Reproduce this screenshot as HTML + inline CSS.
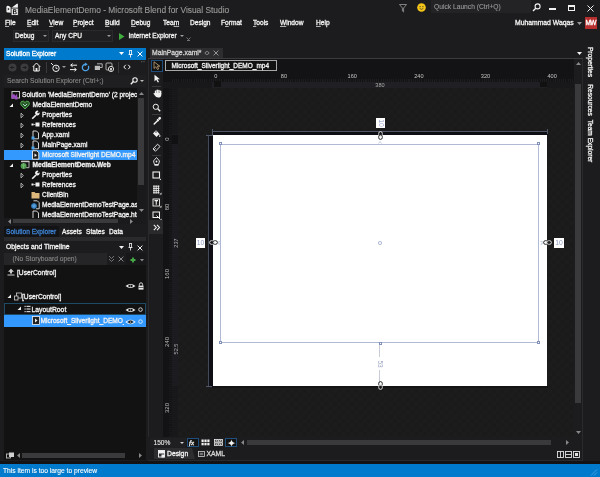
<!DOCTYPE html>
<html><head><meta charset="utf-8">
<style>
*{margin:0;padding:0;box-sizing:border-box}
html,body{width:600px;height:477px;overflow:hidden;background:#1c1c1e;font-family:"Liberation Sans",sans-serif;color:#f1f1f1;font-size:6.5px}
.a{position:absolute;white-space:nowrap;overflow:visible}
.t{position:absolute;white-space:nowrap;line-height:10px;-webkit-text-stroke-width:0.3px}
u{text-decoration:underline;text-decoration-thickness:0.6px;text-underline-offset:0.6px;text-decoration-color:#b0b0b0}
</style></head><body>
<div style="position:absolute;left:0;top:0;width:600px;height:477px;overflow:hidden;will-change:transform">

<svg class="a" style="left:6px;top:3px;" width="13" height="13" viewBox="0 0 13 13"><path d="M0.4 4 Q0.6 2.9 1.8 2.8 L3 3 L5.2 5 L11.2 0.6 L11.9 0.9 L11.9 11 L5 10 L3 9.4 L1.6 9.6 Q0.5 9.5 0.4 8.4 Z" fill="#f2f2f2"/><path d="M1.8 4.8 L3.6 6.1 L1.8 7.4 Z" fill="#1c1c1e"/><rect x="5.1" y="5.1" width="7.2" height="7.4" fill="#f2f2f2" stroke="#1c1c1e" stroke-width="0.9"/><path d="M6.9 6.3 H9.3 Q10.6 6.4 10.5 7.7 Q10.4 8.4 9.7 8.7 Q10.9 9 10.8 10.2 Q10.6 11.3 9.3 11.3 H6.9 Z M8 7.2 V8.3 H9 Q9.5 8.2 9.5 7.75 Q9.5 7.2 9 7.2 Z M8 9.1 V10.4 H9.2 Q9.8 10.4 9.8 9.75 Q9.8 9.1 9.2 9.1 Z" fill="#1c1c1e" fill-rule="evenodd"/></svg>
<div class="t" style="left:25px;top:5px;font-size:8.4px;color:#9c9c9c;-webkit-text-stroke-width:0.1px">MediaElementDemo - Microsoft Blend for Visual Studio</div>
<svg class="a" style="left:399px;top:4px;" width="8" height="9" viewBox="0 0 8 9"><path d="M0.5 0.5 H7.5 L4.6 4 V8 L3.4 7 V4 Z" fill="none" stroke="#9a9a9a" stroke-width="0.8"/></svg>
<svg class="a" style="left:417px;top:3px;" width="9" height="9" viewBox="0 0 9 9"><circle cx="4.5" cy="4.5" r="4.3" fill="#f5c518"/><circle cx="3.1" cy="3.6" r="0.6" fill="#333"/><circle cx="5.9" cy="3.6" r="0.6" fill="#333"/><path d="M2.6 5.4 Q4.5 7.3 6.4 5.4" stroke="#333" stroke-width="0.7" fill="none"/></svg>
<div class="a" style="left:430.5px;top:0px;width:100px;height:13px;background:#232326;"></div>
<div class="t" style="left:434px;top:2px;font-size:6.7px;color:#9a9a9a;-webkit-text-stroke-width:0.1px">Quick Launch (Ctrl+Q)</div>
<svg class="a" style="left:532px;top:2.5px;" width="9" height="9" viewBox="0 0 9 9"><circle cx="5.6" cy="3.4" r="2.5" fill="none" stroke="#f1f1f1" stroke-width="1.1"/><path d="M3.8 5.2 L1 8" stroke="#f1f1f1" stroke-width="1.4"/></svg>
<div class="a" style="left:549px;top:8px;width:7px;height:2px;background:#f1f1f1;"></div>
<div class="a" style="left:568px;top:4.5px;width:7px;height:6px;border:1px solid #f1f1f1;border-top-width:2px"></div>
<svg class="a" style="left:587px;top:4.5px;" width="7" height="7" viewBox="0 0 7 7"><path d="M0.5 0.5 L6.5 6.5 M6.5 0.5 L0.5 6.5" stroke="#f1f1f1" stroke-width="1"/></svg>
<div class="t" style="left:5px;top:18px;font-size:6.6px;color:#f1f1f1;"><u>F</u>ile</div>
<div class="t" style="left:27px;top:18px;font-size:6.6px;color:#f1f1f1;"><u>E</u>dit</div>
<div class="t" style="left:49px;top:18px;font-size:6.6px;color:#f1f1f1;"><u>V</u>iew</div>
<div class="t" style="left:73px;top:18px;font-size:6.6px;color:#f1f1f1;"><u>P</u>roject</div>
<div class="t" style="left:105px;top:18px;font-size:6.6px;color:#f1f1f1;"><u>B</u>uild</div>
<div class="t" style="left:131px;top:18px;font-size:6.6px;color:#f1f1f1;"><u>D</u>ebug</div>
<div class="t" style="left:163px;top:18px;font-size:6.6px;color:#f1f1f1;">Tea<u>m</u></div>
<div class="t" style="left:190px;top:18px;font-size:6.6px;color:#f1f1f1;">Design</div>
<div class="t" style="left:221px;top:18px;font-size:6.6px;color:#f1f1f1;">F<u>o</u>rmat</div>
<div class="t" style="left:253px;top:18px;font-size:6.6px;color:#f1f1f1;"><u>T</u>ools</div>
<div class="t" style="left:280px;top:18px;font-size:6.6px;color:#f1f1f1;"><u>W</u>indow</div>
<div class="t" style="left:316px;top:18px;font-size:6.6px;color:#f1f1f1;"><u>H</u>elp</div>
<div class="t" style="left:515px;top:18px;font-size:6.8px;color:#f1f1f1;">Muhammad Waqas</div>
<svg class="a" style="left:577px;top:22px;" width="5" height="3" viewBox="0 0 5 3"><path d="M0 0 H5 L2.5 3Z" fill="#9a9a9a"/></svg>
<div class="a" style="left:585px;top:17px;width:12px;height:12px;background:#b52f2f;"></div>
<div class="t" style="left:585.5px;top:18px;font-size:6.5px;color:#ffffff;letter-spacing:-0.6px">MW</div>
<div class="a" style="left:13px;top:30px;width:36px;height:12px;background:#1f1f21;border:1px solid #2a2a2d"></div>
<div class="t" style="left:15px;top:31px;font-size:6.6px;color:#f1f1f1;">Debug</div>
<svg class="a" style="left:43px;top:35px;" width="4" height="2" viewBox="0 0 4 2"><path d="M0 0 H4 L2 2Z" fill="#9a9a9a"/></svg>
<div class="a" style="left:52px;top:30px;width:61px;height:12px;background:#1f1f21;border:1px solid #2a2a2d"></div>
<div class="t" style="left:55px;top:31px;font-size:6.6px;color:#f1f1f1;">Any CPU</div>
<svg class="a" style="left:107px;top:35px;" width="4" height="2" viewBox="0 0 4 2"><path d="M0 0 H4 L2 2Z" fill="#9a9a9a"/></svg>
<svg class="a" style="left:118px;top:33px;" width="7" height="7" viewBox="0 0 7 7"><path d="M1 0 L6.5 3.5 L1 7Z" fill="#3fae3f"/></svg>
<div class="t" style="left:128.5px;top:31px;font-size:6.5px;color:#f1f1f1;">Internet Explorer</div>
<svg class="a" style="left:180px;top:35px;" width="4" height="2" viewBox="0 0 4 2"><path d="M0 0 H4 L2 2Z" fill="#9a9a9a"/></svg>
<svg class="a" style="left:186px;top:37px;" width="5" height="4" viewBox="0 0 5 4"><path d="M0.5 0.5 L2.5 2.5 L4.5 0.5 M1 3.5 H4" stroke="#9a9a9a" stroke-width="0.7" fill="none"/></svg>
<div class="a" style="left:4px;top:48px;width:142px;height:12px;background:#007acc;"></div>
<div class="t" style="left:6px;top:48.5px;font-size:6.6px;color:#ffffff;">Solution Explorer</div>
<svg class="a" style="left:119px;top:52px;" width="5" height="3" viewBox="0 0 5 3"><path d="M0 0 H5 L2.5 3Z" fill="#ffffff"/></svg>
<svg class="a" style="left:128px;top:50px;" width="5" height="8" viewBox="0 0 5 8"><path d="M1 0.5 H4 M1.5 0.5 V4.5 H3.5 V0.5 M0.5 4.5 H4.5 M2.5 4.5 V7.5" stroke="#ffffff" stroke-width="0.8" fill="none"/></svg>
<svg class="a" style="left:136.5px;top:50.5px;" width="6" height="6" viewBox="0 0 6 6"><path d="M0.6 0.6 L5.4 5.4 M5.4 0.6 L0.6 5.4" stroke="#ffffff" stroke-width="1"/></svg>
<div class="a" style="left:4px;top:60px;width:142px;height:160px;background:#1c1c1e;"></div>
<svg class="a" style="left:8px;top:63px;" width="9" height="9" viewBox="0 0 9 9"><circle cx="4.5" cy="4.5" r="4" fill="#3c3c3f"/><path d="M6.3 4.5 H2.8 M4.3 3 L2.8 4.5 L4.3 6" stroke="#1c1c1e" stroke-width="1" fill="none"/></svg>
<svg class="a" style="left:20px;top:63px;" width="9" height="9" viewBox="0 0 9 9"><circle cx="4.5" cy="4.5" r="4" fill="#3c3c3f"/><path d="M2.7 4.5 H6.2 M4.7 3 L6.2 4.5 L4.7 6" stroke="#1c1c1e" stroke-width="1" fill="none"/></svg>
<svg class="a" style="left:32px;top:62px;" width="9" height="10" viewBox="0 0 9 10"><path d="M0.8 4.8 L4.5 1 L8.2 4.8 M1.8 4 V9 H7.2 V4" stroke="#f1f1f1" stroke-width="1" fill="none"/><rect x="3.6" y="6" width="1.8" height="3" fill="#f1f1f1"/></svg>
<div class="a" style="left:46px;top:62px;width:1px;height:11px;background:#3a3a3d;"></div>
<svg class="a" style="left:50px;top:62px;" width="11" height="11" viewBox="0 0 11 11"><circle cx="6" cy="6.3" r="3.2" fill="none" stroke="#f1f1f1" stroke-width="1"/><path d="M6 4.5 V6.5 H7.5" stroke="#f1f1f1" stroke-width="0.8" fill="none"/><path d="M1 1 L3 3" stroke="#f1f1f1" stroke-width="1"/></svg>
<svg class="a" style="left:62px;top:66px;" width="4" height="2" viewBox="0 0 4 2"><path d="M0 0 H4 L2 2Z" fill="#9a9a9a"/></svg>
<svg class="a" style="left:69px;top:63px;" width="9" height="9" viewBox="0 0 9 9"><path d="M8 2.2 H2 M3.6 0.6 L1.6 2.2 L3.6 3.8 M1 6.6 H7 M5.4 5 L7.4 6.6 L5.4 8.2" stroke="#f1f1f1" stroke-width="1" fill="none"/></svg>
<svg class="a" style="left:81px;top:62px;" width="9" height="10" viewBox="0 0 9 10"><path d="M4.5 2.3 A3.2 3.2 0 1 0 7.3 3.9" stroke="#4ba3e8" stroke-width="1.3" fill="none"/><path d="M3.8 0.4 L6.8 2.3 L3.8 4.2 Z" fill="#4ba3e8"/></svg>
<svg class="a" style="left:94px;top:63px;" width="9" height="8" viewBox="0 0 9 8"><path d="M3 0.8 H8.2 V4.5 H6" stroke="#bdbdbd" stroke-width="0.9" fill="none"/><rect x="0.8" y="2.8" width="5.2" height="4.2" fill="#bdbdbd"/></svg>
<svg class="a" style="left:105px;top:62px;" width="10" height="11" viewBox="0 0 10 11"><rect x="1" y="1" width="6" height="7" rx="1" fill="none" stroke="#bdbdbd" stroke-width="0.9"/><circle cx="6" cy="7" r="2.6" fill="#1c1c1e" stroke="#f1f1f1" stroke-width="0.9"/><rect x="5.2" y="6" width="1.6" height="2.5" fill="#f1f1f1"/></svg>
<div class="a" style="left:118px;top:62px;width:1px;height:11px;background:#3a3a3d;"></div>
<svg class="a" style="left:123px;top:64px;" width="8" height="6" viewBox="0 0 8 6"><path d="M2.8 0.8 L0.8 3 L2.8 5.2 M5.2 0.8 L7.2 3 L5.2 5.2" stroke="#f1f1f1" stroke-width="1" fill="none"/></svg>
<svg class="a" style="left:141px;top:61px;" width="4" height="3" viewBox="0 0 4 3"><circle cx="0.7" cy="0.7" r="0.6" fill="#6a6a6a"/><circle cx="3" cy="0.7" r="0.6" fill="#6a6a6a"/></svg>
<div class="a" style="left:4px;top:75px;width:142px;height:12px;background:#1f1f21;"></div>
<div class="t" style="left:7px;top:76px;font-size:6.7px;color:#8a8a8a;-webkit-text-stroke-width:0.1px">Search Solution Explorer (Ctrl+;)</div>
<svg class="a" style="left:130px;top:77px;" width="8" height="8" viewBox="0 0 8 8"><circle cx="5" cy="3" r="2.2" fill="none" stroke="#f1f1f1" stroke-width="1.1"/><path d="M3.4 4.6 L0.8 7.2" stroke="#f1f1f1" stroke-width="1.4"/></svg>
<svg class="a" style="left:140px;top:80px;" width="4" height="2" viewBox="0 0 4 2"><path d="M0 0 H4 L2 2Z" fill="#bdbdbd"/></svg>
<div class="a" style="left:4px;top:88px;width:133px;height:130px;background:#121212;"></div>
<div class="a" style="left:137px;top:88px;width:9px;height:130px;background:#1a1a1c;"></div>
<svg class="a" style="left:139px;top:92px;" width="5" height="3" viewBox="0 0 5 3"><path d="M0 3 H5 L2.5 0Z" fill="#888"/></svg>
<div class="a" style="left:138px;top:98px;width:6px;height:87px;background:#3a3a3c;"></div>
<svg class="a" style="left:139px;top:209px;" width="5" height="3" viewBox="0 0 5 3"><path d="M0 0 H5 L2.5 3Z" fill="#888"/></svg>
<div class="a" style="left:4px;top:218px;width:133px;height:6px;background:#1a1a1c;"></div>
<svg class="a" style="left:8px;top:219px;" width="3" height="5" viewBox="0 0 3 5"><path d="M3 0 V5 L0 2.5Z" fill="#888"/></svg>
<div class="a" style="left:13px;top:219px;width:105px;height:4px;background:#3a3a3c;"></div>
<svg class="a" style="left:130px;top:219px;" width="3" height="5" viewBox="0 0 3 5"><path d="M0 0 V5 L3 2.5Z" fill="#888"/></svg>
<div class="a" style="left:137px;top:218px;width:9px;height:6px;background:#1a1a1c;"></div>
<div class="a" style="left:4px;top:88px;width:133px;height:130px;overflow:hidden">
<svg class="a" style="left:7px;top:2.8px" width="9" height="9"><rect x="1" y="0.5" width="7.5" height="6.5" fill="none" stroke="#d8d8d8" stroke-width="0.9"/><path d="M0.5 4 L3 3 L4.5 4.8 L6 2.8 L6.5 8.5 L4.5 8.5 L3 7 L0.5 8Z" fill="#9b4fbf"/></svg>
<div class="t" style="left:18px;top:1.8px;font-size:6.6px;color:#f1f1f1;">Solution 'MediaElementDemo' (2 projects)</div>
<svg class="a" style="left:5.199999999999999px;top:14.600000000000001px" width="5" height="5"><path d="M4 0.5 V4 H0.5Z" fill="#f1f1f1"/></svg>
<svg class="a" style="left:16px;top:11.8px" width="10" height="10"><path d="M5 9 L1 5 Q0 3 1.5 1.5 Q3.5 0.3 5 2.5 Q6.5 0.3 8.5 1.5 Q10 3 9 5Z" fill="#2a5a2a" stroke="#55b555" stroke-width="0.9"/><path d="M3 4 L5 6 L7 4" stroke="#cfe" stroke-width="0.8" fill="none"/></svg>
<div class="t" style="left:28.5px;top:11.8px;font-size:6.6px;color:#f1f1f1;">MediaElementDemo</div>
<svg class="a" style="left:16px;top:23.8px" width="5" height="7"><path d="M1 1.2 L3.4 3.5 L1 5.8Z" fill="none" stroke="#d0d0d0" stroke-width="0.8"/></svg>
<svg class="a" style="left:27px;top:21.8px" width="9" height="10"><path d="M1.2 8.8 L5 5" stroke="#f1f1f1" stroke-width="1.6"/><path d="M4.2 3.8 A2.3 2.3 0 0 1 7.6 1 L6.2 2.6 L7 3.5 L8.4 2.2 A2.3 2.3 0 0 1 5.6 5.4Z" fill="#f1f1f1"/></svg>
<div class="t" style="left:38px;top:21.8px;font-size:6.6px;color:#f1f1f1;">Properties</div>
<svg class="a" style="left:16px;top:33.8px" width="5" height="7"><path d="M1 1.2 L3.4 3.5 L1 5.8Z" fill="none" stroke="#d0d0d0" stroke-width="0.8"/></svg>
<svg class="a" style="left:27px;top:31.8px" width="9" height="10"><rect x="0.5" y="3.5" width="2" height="2" fill="#f1f1f1"/><rect x="2.5" y="4.2" width="2" height="0.7" fill="#f1f1f1"/><rect x="4.5" y="2.5" width="4" height="4" fill="#f1f1f1"/></svg>
<div class="t" style="left:38px;top:31.8px;font-size:6.6px;color:#f1f1f1;">References</div>
<svg class="a" style="left:16px;top:43.8px" width="5" height="7"><path d="M1 1.2 L3.4 3.5 L1 5.8Z" fill="none" stroke="#d0d0d0" stroke-width="0.8"/></svg>
<svg class="a" style="left:27px;top:41.8px" width="9" height="10"><path d="M2 1 H5.5 L7.5 3 V8.8 H2Z" fill="none" stroke="#e6e6e6" stroke-width="0.9"/><rect x="0.5" y="6.5" width="3" height="3" fill="#4ba3e8"/></svg>
<div class="t" style="left:38px;top:41.8px;font-size:6.6px;color:#f1f1f1;">App.xaml</div>
<svg class="a" style="left:16px;top:53.8px" width="5" height="7"><path d="M1 1.2 L3.4 3.5 L1 5.8Z" fill="none" stroke="#d0d0d0" stroke-width="0.8"/></svg>
<svg class="a" style="left:27px;top:51.8px" width="9" height="10"><path d="M2 1 H5.5 L7.5 3 V8.8 H2Z" fill="none" stroke="#e6e6e6" stroke-width="0.9"/><rect x="0.5" y="6.5" width="3" height="3" fill="#4ba3e8"/></svg>
<div class="t" style="left:38px;top:51.8px;font-size:6.6px;color:#f1f1f1;">MainPage.xaml</div>
<div class="a" style="left:0;top:61.8px;width:133px;height:10px;background:#3399ff"></div>
<svg class="a" style="left:27px;top:61.8px" width="9" height="10"><path d="M1.5 0.8 H5.8 L7.8 2.8 V9.2 H1.5Z" fill="#222" stroke="#f1f1f1" stroke-width="0.9"/><path d="M3.5 3.5 L6 5.2 L3.5 6.9Z" fill="#f1f1f1"/></svg>
<div class="t" style="left:38px;top:61.8px;font-size:6.6px;color:#f1f1f1;">Microsoft Silverlight DEMO.mp4</div>
<svg class="a" style="left:5.199999999999999px;top:74.6px" width="5" height="5"><path d="M4 0.5 V4 H0.5Z" fill="#f1f1f1"/></svg>
<svg class="a" style="left:16px;top:71.8px" width="10" height="10"><path d="M1.5 1.3 H9 V7.7 H6" fill="none" stroke="#c8c8c8" stroke-width="0.9"/><rect x="1" y="0.8" width="8.4" height="1.4" fill="#c8c8c8"/><circle cx="3.6" cy="6" r="3" fill="#4f9a4f"/><path d="M1.4 4.8 Q3.6 6.6 5.8 4.8 M3.6 3 V9" stroke="#8fd08f" stroke-width="0.5" fill="none"/></svg>
<div class="t" style="left:28.5px;top:71.8px;font-size:6.6px;color:#f1f1f1;font-weight:bold;">MediaElementDemo.Web</div>
<svg class="a" style="left:16px;top:83.8px" width="5" height="7"><path d="M1 1.2 L3.4 3.5 L1 5.8Z" fill="none" stroke="#d0d0d0" stroke-width="0.8"/></svg>
<svg class="a" style="left:27px;top:81.8px" width="9" height="10"><path d="M1.2 8.8 L5 5" stroke="#f1f1f1" stroke-width="1.6"/><path d="M4.2 3.8 A2.3 2.3 0 0 1 7.6 1 L6.2 2.6 L7 3.5 L8.4 2.2 A2.3 2.3 0 0 1 5.6 5.4Z" fill="#f1f1f1"/></svg>
<div class="t" style="left:38px;top:81.8px;font-size:6.6px;color:#f1f1f1;">Properties</div>
<svg class="a" style="left:16px;top:93.8px" width="5" height="7"><path d="M1 1.2 L3.4 3.5 L1 5.8Z" fill="none" stroke="#d0d0d0" stroke-width="0.8"/></svg>
<svg class="a" style="left:27px;top:91.8px" width="9" height="10"><rect x="0.5" y="3.5" width="2" height="2" fill="#f1f1f1"/><rect x="2.5" y="4.2" width="2" height="0.7" fill="#f1f1f1"/><rect x="4.5" y="2.5" width="4" height="4" fill="#f1f1f1"/></svg>
<div class="t" style="left:38px;top:91.8px;font-size:6.6px;color:#f1f1f1;">References</div>
<svg class="a" style="left:27px;top:101.8px" width="9" height="10"><path d="M0.5 2 H3.5 L4.5 3 H8.5 V8.5 H0.5Z" fill="#dcb67a"/></svg>
<div class="t" style="left:38px;top:101.8px;font-size:6.6px;color:#f1f1f1;">ClientBin</div>
<svg class="a" style="left:27px;top:111.8px" width="10" height="10"><path d="M2.5 0.8 H6.3 L8.2 2.7 V8.8 H5" fill="none" stroke="#e6e6e6" stroke-width="0.9"/><circle cx="3" cy="6" r="2.8" fill="#2f7fc0"/><path d="M0.6 6 H5.4 M3 3.3 V8.7" stroke="#9fd0ff" stroke-width="0.45"/></svg>
<div class="t" style="left:38px;top:111.8px;font-size:6.6px;color:#f1f1f1;">MediaElementDemoTestPage.aspx</div>
<svg class="a" style="left:27px;top:121.8px" width="9" height="10"><path d="M2 1 H5.5 L7.5 3 V9.5 H2Z" fill="none" stroke="#e6e6e6" stroke-width="0.9"/></svg>
<div class="t" style="left:38px;top:121.8px;font-size:6.6px;color:#f1f1f1;">MediaElementDemoTestPage.html</div>
</div>
<div class="a" style="left:4px;top:225px;width:142px;height:12px;background:#1c1c1e;"></div>
<div class="a" style="left:4px;top:226px;width:55px;height:11px;background:#131315;"></div>
<div class="t" style="left:6px;top:226.7px;font-size:6.6px;color:#3d80d0;">Solution Explorer</div>
<div class="t" style="left:62px;top:226.7px;font-size:6.6px;color:#f1f1f1;">Assets</div>
<div class="t" style="left:86px;top:226.7px;font-size:6.6px;color:#f1f1f1;">States</div>
<div class="t" style="left:109px;top:226.7px;font-size:6.6px;color:#f1f1f1;">Data</div>
<div class="a" style="left:4px;top:237px;width:142px;height:4px;background:#2a2a2d;"></div>
<div class="t" style="left:6px;top:242px;font-size:6.8px;color:#f1f1f1;">Objects and Timeline</div>
<svg class="a" style="left:119px;top:246px;" width="5" height="3" viewBox="0 0 5 3"><path d="M0 0 H5 L2.5 3Z" fill="#f1f1f1"/></svg>
<svg class="a" style="left:128px;top:243px;" width="5" height="8" viewBox="0 0 5 8"><path d="M1 0.5 H4 M1.5 0.5 V4.5 H3.5 V0.5 M0.5 4.5 H4.5 M2.5 4.5 V7.5" stroke="#f1f1f1" stroke-width="0.8" fill="none"/></svg>
<svg class="a" style="left:136.5px;top:244.5px;" width="6" height="6" viewBox="0 0 6 6"><path d="M0.6 0.6 L5.4 5.4 M5.4 0.6 L0.6 5.4" stroke="#f1f1f1" stroke-width="1"/></svg>
<div class="a" style="left:4px;top:253px;width:142px;height:12px;background:#1c1c1e;"></div>
<div class="a" style="left:4px;top:253px;width:103px;height:12px;background:#252527;"></div>
<div class="a" style="left:126px;top:253px;width:20px;height:12px;background:#18181a;"></div>
<div class="t" style="left:12.5px;top:254px;font-size:6.7px;color:#8a8a8a;-webkit-text-stroke-width:0.1px">(No Storyboard open)</div>
<svg class="a" style="left:108px;top:255px;" width="7" height="8" viewBox="0 0 7 8"><path d="M1 1 L3.5 3.5 L6 1 M1 4 L3.5 6.5 L6 4" stroke="#8a8a8a" stroke-width="0.8" fill="none"/></svg>
<svg class="a" style="left:118px;top:256px;" width="6" height="6" viewBox="0 0 6 6"><path d="M0.6 0.6 L5.4 5.4 M5.4 0.6 L0.6 5.4" stroke="#8a8a8a" stroke-width="1"/></svg>
<svg class="a" style="left:129.5px;top:256.5px;" width="6" height="6" viewBox="0 0 6 6"><path d="M3 0.5 V5.5 M0.5 3 H5.5" stroke="#45a845" stroke-width="1.8"/></svg>
<svg class="a" style="left:139.5px;top:258.5px;" width="4" height="2.5" viewBox="0 0 4 2.5"><path d="M0 0 H4 L2 2.5Z" fill="#8a8a8a"/></svg>
<div class="a" style="left:4px;top:265px;width:142px;height:195px;background:#121212;"></div>
<svg class="a" style="left:7px;top:268px;" width="8" height="8" viewBox="0 0 8 8"><path d="M4 0.8 L7 3.8 H5 V5.5 H3 V3.8 H1Z" fill="#d0d0d0"/><rect x="0.5" y="6.5" width="7" height="1" fill="#d0d0d0"/></svg>
<div class="t" style="left:17px;top:268px;font-size:6.7px;color:#f1f1f1;">[UserControl]</div>
<svg class="a" style="left:125px;top:283px" width="11" height="6"><path d="M0.5 3 Q5.5 -1.2 10.5 3 Q5.5 7.2 0.5 3Z" fill="#f1f1f1"/><ellipse cx="5.5" cy="3" rx="2.3" ry="1.3" fill="#121212"/><circle cx="5.5" cy="3" r="0.6" fill="#f1f1f1"/></svg>
<svg class="a" style="left:137.5px;top:281.5px;" width="6" height="8" viewBox="0 0 6 8"><path d="M1.4 3.6 V2.4 A1.6 1.6 0 0 1 4.6 2.4 V3.6" stroke="#e8e8e8" stroke-width="0.9" fill="none"/><rect x="0.5" y="3.6" width="5" height="4" fill="#e8e8e8"/><rect x="0.5" y="5.4" width="5" height="0.6" fill="#121212"/></svg>
<svg class="a" style="left:7px;top:294px;" width="5" height="5" viewBox="0 0 5 5"><path d="M4 0.5 V4 H0.5Z" fill="#f1f1f1"/></svg>
<svg class="a" style="left:14px;top:292px;" width="8" height="9" viewBox="0 0 8 9"><rect x="2.5" y="1" width="5" height="5" fill="none" stroke="#d0d0d0" stroke-width="0.8"/><rect x="0.5" y="4" width="3.5" height="4" fill="#111" stroke="#d0d0d0" stroke-width="0.8"/></svg>
<div class="t" style="left:22px;top:292px;font-size:6.7px;color:#f1f1f1;">[UserControl]</div>
<div class="a" style="left:4px;top:303px;width:141.5px;height:12px;border:1px solid #1f4a66;background:#121212"></div>
<svg class="a" style="left:17px;top:306px;" width="5" height="5" viewBox="0 0 5 5"><path d="M4 0.5 V4 H0.5Z" fill="#f1f1f1"/></svg>
<svg class="a" style="left:24px;top:305px;" width="7" height="8" viewBox="0 0 7 8"><rect x="0.5" y="0.8" width="1.2" height="1.2" fill="#d0d0d0"/><rect x="0.5" y="3.4" width="1.2" height="1.2" fill="#d0d0d0"/><rect x="0.5" y="6" width="1.2" height="1.2" fill="#d0d0d0"/><rect x="2.5" y="0.8" width="4" height="1.2" fill="#d0d0d0"/><rect x="2.5" y="3.4" width="4" height="1.2" fill="#d0d0d0"/><rect x="2.5" y="6" width="4" height="1.2" fill="#d0d0d0"/></svg>
<div class="t" style="left:31.5px;top:305px;font-size:6.8px;color:#f1f1f1;">LayoutRoot</div>
<svg class="a" style="left:125px;top:306.5px" width="11" height="6"><path d="M0.5 3 Q5.5 -1.2 10.5 3 Q5.5 7.2 0.5 3Z" fill="#f1f1f1"/><ellipse cx="5.5" cy="3" rx="2.3" ry="1.3" fill="#121212"/><circle cx="5.5" cy="3" r="0.6" fill="#f1f1f1"/></svg>
<svg class="a" style="left:137.5px;top:306.5px;" width="5" height="5" viewBox="0 0 5 5"><circle cx="2.5" cy="2.6" r="1.8" fill="none" stroke="#e0e0e0" stroke-width="0.9"/></svg>
<div class="a" style="left:4px;top:315px;width:142px;height:12px;background:#3399ff;"></div>
<svg class="a" style="left:32px;top:316px;" width="8" height="9" viewBox="0 0 8 9"><rect x="0.5" y="0.5" width="7" height="8" fill="#222" stroke="#f1f1f1" stroke-width="0.8"/><path d="M3 2.5 L5.5 4.5 L3 6.5Z" fill="#f1f1f1"/></svg>
<div class="a" style="left:40.5px;top:315px;width:83px;height:12px;overflow:hidden">
<div class="t" style="left:0;top:1.3px;font-size:6.6px;color:#f1f1f1">Microsoft_Silverlight_DEMO_mp4</div></div>
<svg class="a" style="left:125px;top:318.5px" width="11" height="6"><path d="M0.8 3 Q5.5 -0.6 10.2 3 Q5.5 6.6 0.8 3Z" fill="#3399ff" stroke="#f1f1f1" stroke-width="0.9"/><ellipse cx="5.5" cy="3" rx="2.3" ry="1.4" fill="#222"/><circle cx="5.5" cy="3" r="0.6" fill="#f1f1f1"/></svg>
<svg class="a" style="left:137.5px;top:318.5px;" width="5" height="5" viewBox="0 0 5 5"><circle cx="2.5" cy="2.6" r="1.8" fill="none" stroke="#d8ecff" stroke-width="0.9"/></svg>
<svg class="a" style="left:6px;top:452px;" width="9" height="7" viewBox="0 0 9 7"><rect x="0.5" y="2" width="4" height="4" fill="none" stroke="#d0d0d0" stroke-width="0.8"/><rect x="3" y="0.5" width="5" height="4.5" fill="#d0d0d0"/></svg>
<svg class="a" style="left:17px;top:453px;" width="3" height="5" viewBox="0 0 3 5"><path d="M3 0 V5 L0 2.5Z" fill="#888"/></svg>
<div class="a" style="left:22px;top:453px;width:103px;height:5px;background:#3a3a3c;"></div>
<svg class="a" style="left:139px;top:453px;" width="3" height="5" viewBox="0 0 3 5"><path d="M0 0 V5 L3 2.5Z" fill="#888"/></svg>
<div class="a" style="left:150px;top:48px;width:73px;height:10px;background:#2d2d30;"></div>
<div class="t" style="left:152px;top:48px;font-size:6.8px;color:#d0d0d0;">MainPage.xaml*</div>
<svg class="a" style="left:204px;top:50px;" width="6" height="6" viewBox="0 0 6 6"><circle cx="3" cy="3" r="1.6" fill="none" stroke="#8a8a8a" stroke-width="0.8"/><path d="M0.5 3 H1.4 M4.6 3 H5.5" stroke="#8a8a8a" stroke-width="0.8"/></svg>
<svg class="a" style="left:213px;top:50px;" width="6" height="6" viewBox="0 0 6 6"><path d="M0.6 0.6 L5.4 5.4 M5.4 0.6 L0.6 5.4" stroke="#a0a0a0" stroke-width="0.9"/></svg>
<svg class="a" style="left:577px;top:52px;" width="5" height="3" viewBox="0 0 5 3"><path d="M0 0 H5 L2.5 3Z" fill="#f1f1f1"/></svg>
<div class="a" style="left:148px;top:58px;width:435px;height:1px;background:#3c3c40;"></div>
<div class="a" style="left:148px;top:59px;width:435px;height:401px;background:#1c1c1e;"></div>
<div class="a" style="left:148px;top:59px;width:15px;height:378px;background:#1c1c1e;"></div>
<div class="a" style="left:148px;top:59px;width:1px;height:401px;background:#2a2a2d;"></div>
<div class="a" style="left:150.5px;top:59.5px;width:12.5px;height:12px;border:1px solid #1f4e7c;background:#121212"></div>
<svg class="a" style="left:153px;top:61px;" width="8" height="9" viewBox="0 0 8 9"><path d="M1 0.8 L1 7.5 L2.8 5.8 L4.5 8.5 L5.7 7.9 L4.2 5.2 L6.8 5.2 Z" fill="none" stroke="#c8a878" stroke-width="0.8"/></svg>
<svg class="a" style="left:153px;top:74px;" width="8" height="9" viewBox="0 0 8 9"><path d="M1.5 0.8 L1.5 7.5 L3.2 5.8 L4.8 8.5 L6 7.9 L4.5 5.2 L7 5.2 Z" fill="#f1f1f1"/></svg>
<div class="a" style="left:152px;top:86px;width:9px;height:1px;background:#3a3a3d;"></div>
<svg class="a" style="left:152.5px;top:89px;" width="9" height="9" viewBox="0 0 9 9"><rect x="1.8" y="1.4" width="1.5" height="4" rx="0.7" fill="#f1f1f1"/><rect x="3.5" y="0.5" width="1.5" height="4.5" rx="0.7" fill="#f1f1f1"/><rect x="5.2" y="0.7" width="1.5" height="4.3" rx="0.7" fill="#f1f1f1"/><rect x="6.9" y="1.6" width="1.4" height="3.8" rx="0.7" fill="#f1f1f1"/><path d="M1.8 4 H8.3 V6 Q8 8.6 5.2 8.6 Q2.8 8.6 1.8 6.6 L0.4 4.6 Q0.6 3.8 1.4 4.2 Z" fill="#f1f1f1"/></svg>
<svg class="a" style="left:152px;top:103px;" width="9" height="9" viewBox="0 0 9 9"><circle cx="3.8" cy="3.8" r="2.6" fill="none" stroke="#f1f1f1" stroke-width="1"/><path d="M5.8 5.8 L8.2 8.2" stroke="#f1f1f1" stroke-width="1.4"/></svg>
<div class="a" style="left:152px;top:114px;width:9px;height:1px;background:#3a3a3d;"></div>
<svg class="a" style="left:152.5px;top:116px;" width="9" height="9" viewBox="0 0 9 9"><path d="M1.2 8 L5 4.2" stroke="#f1f1f1" stroke-width="1.5" stroke-linecap="round"/><path d="M4 3.2 L5.8 5" stroke="#f1f1f1" stroke-width="1.1"/><ellipse cx="6.6" cy="2.4" rx="1.6" ry="1.3" transform="rotate(-45 6.6 2.4)" fill="#f1f1f1"/></svg>
<svg class="a" style="left:152px;top:129px;" width="9" height="10" viewBox="0 0 9 10"><path d="M4 1 L1 4.5 L4.5 8 L7.5 5 Z" fill="#f1f1f1"/><path d="M4 1 V4" stroke="#1c1c1e" stroke-width="0.8"/><path d="M7.5 5.5 Q8.3 7 7.6 8" stroke="#f1f1f1" stroke-width="1"/></svg>
<svg class="a" style="left:152px;top:143px;" width="9" height="9" viewBox="0 0 9 9"><path d="M1 6 L5.5 1.2 L8 3.5 L3.5 8.2 Z" fill="none" stroke="#f1f1f1" stroke-width="0.9"/><path d="M2 7 L4 5" stroke="#f1f1f1" stroke-width="0.7"/></svg>
<div class="a" style="left:152px;top:155px;width:9px;height:1px;background:#3a3a3d;"></div>
<svg class="a" style="left:152px;top:157px;" width="9" height="9" viewBox="0 0 9 9"><path d="M4.5 0.5 L7.5 4 L6.5 7.5 H2.5 L1.5 4 Z" fill="none" stroke="#f1f1f1" stroke-width="0.9"/><circle cx="4.5" cy="4.5" r="0.9" fill="#f1f1f1"/><rect x="2.5" y="7.5" width="4" height="1.2" fill="#f1f1f1"/></svg>
<svg class="a" style="left:152px;top:171px;" width="10" height="10" viewBox="0 0 10 10"><rect x="1" y="1" width="6.5" height="6" fill="none" stroke="#f1f1f1" stroke-width="1.1"/><path d="M9 7.5 V9 H7.5Z" fill="#f1f1f1"/></svg>
<svg class="a" style="left:152px;top:185px;" width="10" height="10" viewBox="0 0 10 10"><path d="M1 1.2 H7.5 M1 3.4 H7.5 M1 5.6 H7.5 M1 7.8 H7.5 M2 0.5 V8.5 M4.2 0.5 V8.5 M6.4 0.5 V8.5" stroke="#f1f1f1" stroke-width="0.9"/><path d="M9.5 7.5 V9.5 H7.5Z" fill="#f1f1f1"/></svg>
<svg class="a" style="left:152px;top:198px;" width="10" height="10" viewBox="0 0 10 10"><rect x="1" y="1" width="6.5" height="7" fill="none" stroke="#f1f1f1" stroke-width="0.9"/><path d="M2.5 2.6 H6 M4.25 2.6 V6.8" stroke="#f1f1f1" stroke-width="1.1"/><path d="M9.5 7.5 V9.5 H7.5Z" fill="#f1f1f1"/></svg>
<svg class="a" style="left:152px;top:211px;" width="10" height="10" viewBox="0 0 10 10"><rect x="1" y="1" width="6.5" height="5.5" fill="none" stroke="#f1f1f1" stroke-width="1"/><path d="M4.5 4.5 L8 8" stroke="#f1f1f1" stroke-width="1"/><path d="M9.5 7.5 V9.5 H7.5Z" fill="#f1f1f1"/></svg>
<div class="a" style="left:149px;top:220px;width:14px;height:14px;background:#2a2a2d;"></div>
<svg class="a" style="left:153px;top:224px;" width="8" height="7" viewBox="0 0 8 7"><path d="M0.8 0.8 L3.3 3.5 L0.8 6.2 M4 0.8 L6.5 3.5 L4 6.2" stroke="#f1f1f1" stroke-width="1.1" fill="none"/></svg>
<div class="a" style="left:163px;top:59px;width:411px;height:23px;background:#131315;"></div>
<div class="a" style="left:172px;top:79px;width:402px;height:3px;background:repeating-linear-gradient(90deg,#1d1d1f 0,#1d1d1f 1px,transparent 1px,transparent 2.15px)"></div>
<div class="a" style="left:163px;top:82px;width:411px;height:6px;background:#18181a;"></div>
<div class="a" style="left:212px;top:82px;width:335px;height:6px;background:#202024;"></div>
<div class="a" style="left:214px;top:80.5px;width:7px;height:6.5px;background:#111;"></div>
<div class="a" style="left:540px;top:82px;width:7px;height:5px;background:#111;"></div>
<div class="t" style="left:214.20px;top:71px;font-size:5.6px;color:#c4c4c4;-webkit-text-stroke-width:0">0</div>
<div class="t" style="left:280.86px;top:71px;font-size:5.6px;color:#c4c4c4;-webkit-text-stroke-width:0">80</div>
<div class="t" style="left:347.52px;top:71px;font-size:5.6px;color:#c4c4c4;-webkit-text-stroke-width:0">160</div>
<div class="t" style="left:414.18px;top:71px;font-size:5.6px;color:#c4c4c4;-webkit-text-stroke-width:0">240</div>
<div class="t" style="left:480.84px;top:71px;font-size:5.6px;color:#c4c4c4;-webkit-text-stroke-width:0">320</div>
<div class="t" style="left:547.50px;top:71px;font-size:5.6px;color:#c4c4c4;-webkit-text-stroke-width:0">400</div>
<div class="t" style="left:370px;width:20px;text-align:center;top:79.5px;font-size:5.6px;color:#a8a8a8;-webkit-text-stroke-width:0">380</div>
<div class="a" style="left:165px;top:60px;width:112px;height:11px;border:1px solid #a8a8a8;background:#121212"></div>
<div class="t" style="left:171.5px;top:61px;font-size:6.5px;color:#f1f1f1;">Microsoft_Silverlight_DEMO_mp4</div>
<div class="a" style="left:163px;top:88px;width:9px;height:349px;background:#131315;"></div>
<div class="a" style="left:169px;top:88px;width:3px;height:349px;background:repeating-linear-gradient(180deg,#19191b 0,#19191b 1px,transparent 1px,transparent 2.15px)"></div>
<div class="a" style="left:172px;top:88px;width:6px;height:349px;background:#18181a;"></div>
<div class="a" style="left:172px;top:134px;width:6px;height:252px;background:#1c1c20;"></div>
<div class="a" style="left:172px;top:135px;width:6px;height:9px;background:#111113;"></div>
<div class="t" style="left:156.5px;width:20px;text-align:center;top:133.5px;font-size:6px;color:#bdbdbd;-webkit-text-stroke-width:0;transform:rotate(-90deg)">0</div>
<div class="t" style="left:156.5px;width:20px;text-align:center;top:201.9px;font-size:6px;color:#bdbdbd;-webkit-text-stroke-width:0;transform:rotate(-90deg)">80</div>
<div class="t" style="left:156.5px;width:20px;text-align:center;top:269.4px;font-size:6px;color:#bdbdbd;-webkit-text-stroke-width:0;transform:rotate(-90deg)">160</div>
<div class="t" style="left:156.5px;width:20px;text-align:center;top:336.7px;font-size:6px;color:#bdbdbd;-webkit-text-stroke-width:0;transform:rotate(-90deg)">240</div>
<div class="t" style="left:156.5px;width:20px;text-align:center;top:403.3px;font-size:6px;color:#bdbdbd;-webkit-text-stroke-width:0;transform:rotate(-90deg)">320</div>
<div class="t" style="left:165.5px;width:20px;text-align:center;top:238px;font-size:5.6px;color:#b0b0b0;-webkit-text-stroke-width:0;transform:rotate(-90deg)">237</div>
<div class="t" style="left:165.5px;width:20px;text-align:center;top:344px;font-size:5.6px;color:#b0b0b0;-webkit-text-stroke-width:0;transform:rotate(-90deg)">52.5</div>
<div class="a" style="left:178px;top:88px;width:396px;height:349px;background-color:#1c1c1c;background-image:linear-gradient(45deg,#1a1a1a 25%,transparent 25%,transparent 75%,#1a1a1a 75%),linear-gradient(45deg,#1a1a1a 25%,transparent 25%,transparent 75%,#1a1a1a 75%);background-size:8.6px 8.6px;background-position:0 0,4.3px 4.3px"></div>
<div class="a" style="left:212.5px;top:131px;width:335px;height:3.5px;background:#0e0e12;"></div>
<div class="a" style="left:208px;top:134.5px;width:4.5px;height:251px;background:#0e0e14;"></div>
<div class="a" style="left:212px;top:386px;width:336px;height:1.5px;background:#141416;"></div>
<div class="a" style="left:212px;top:131px;width:335.5px;height:1px;background:#4e5668;"></div>
<div class="a" style="left:208px;top:134.5px;width:1px;height:252px;background:#434a58;"></div>
<div class="a" style="left:211.7px;top:129px;width:1px;height:6px;background:#4e5668;"></div>
<div class="a" style="left:546.5px;top:129px;width:1px;height:5px;background:#4e5668;"></div>
<div class="a" style="left:206px;top:135px;width:6.5px;height:1px;background:#4e5668;"></div>
<div class="a" style="left:206px;top:386px;width:6px;height:1px;background:#4e5668;"></div>
<div class="a" style="left:212.5px;top:134.5px;width:334.5px;height:251px;background:#ffffff;"></div>
<div class="a" style="left:220.3px;top:143.5px;width:318.5px;height:199.5px;border:1px solid #b0bad6"></div>
<div class="a" style="left:218.8px;top:142px;width:3px;height:3px;border:0.8px solid #8090b8;background:#fff"></div>
<div class="a" style="left:537.3px;top:142px;width:3px;height:3px;border:0.8px solid #8090b8;background:#fff"></div>
<div class="a" style="left:218.8px;top:341px;width:3px;height:3px;border:0.8px solid #8090b8;background:#fff"></div>
<div class="a" style="left:537.3px;top:341px;width:3px;height:3px;border:0.8px solid #8090b8;background:#fff"></div>
<div class="a" style="left:376px;top:118px;width:9px;height:10px;background:#fff"></div>
<div class="t" style="left:370.5px;width:20px;text-align:center;top:118px;font-size:6.8px;color:#8a98c4;-webkit-text-stroke-width:0;transform:rotate(90deg)">10</div>
<div class="a" style="left:196px;top:238px;width:9px;height:10px;background:#fff"></div>
<div class="t" style="left:190.5px;width:20px;text-align:center;top:238px;font-size:6.8px;color:#8a98c4;-webkit-text-stroke-width:0">10</div>
<div class="a" style="left:554px;top:238px;width:10px;height:10px;background:#fff"></div>
<div class="t" style="left:549px;width:20px;text-align:center;top:238px;font-size:6.8px;color:#8a98c4;-webkit-text-stroke-width:0">10</div>
<div class="a" style="left:379.3px;top:345px;width:0.8px;height:12px;background:#c8ccd8;"></div>
<div class="a" style="left:379.3px;top:370px;width:0.8px;height:13px;background:#c8ccd8;"></div>
<div class="t" style="left:370px;width:20px;text-align:center;top:358.5px;font-size:6.5px;color:#98a2c0;-webkit-text-stroke-width:0;transform:rotate(90deg)">53</div>
<svg class="a" style="left:377.5px;top:131px" width="5" height="9"><rect x="0.7" y="0.6" width="3.6" height="4.4" rx="1.8" fill="none" stroke="#d8d8d8" stroke-width="1"/><rect x="0.7" y="3.8" width="3.6" height="4.6" rx="1.8" fill="none" stroke="#222" stroke-width="1"/></svg>
<svg class="a" style="left:377.5px;top:381px" width="5" height="9"><rect x="0.7" y="0.6" width="3.6" height="4.4" rx="1.8" fill="none" stroke="#222" stroke-width="1"/><rect x="0.7" y="3.8" width="3.6" height="4.6" rx="1.8" fill="none" stroke="#d8d8d8" stroke-width="1"/></svg>
<svg class="a" style="left:208.5px;top:240px" width="9" height="5"><rect x="0.6" y="0.7" width="4.4" height="3.6" rx="1.8" fill="none" stroke="#d8d8d8" stroke-width="1"/><rect x="3.8" y="0.7" width="4.6" height="3.6" rx="1.8" fill="none" stroke="#222" stroke-width="1"/></svg>
<svg class="a" style="left:542.5px;top:240px" width="9" height="5"><rect x="0.6" y="0.7" width="4.4" height="3.6" rx="1.8" fill="none" stroke="#222" stroke-width="1"/><rect x="3.8" y="0.7" width="4.6" height="3.6" rx="1.8" fill="none" stroke="#d8d8d8" stroke-width="1"/></svg>
<svg class="a" style="left:378px;top:140.5px;" width="4" height="3" viewBox="0 0 4 3"><path d="M0.5 2.5 L2 0.5 L3.5 2.5" stroke="#b0bcd8" stroke-width="0.7" fill="none"/></svg>
<svg class="a" style="left:218px;top:241px;" width="3" height="4" viewBox="0 0 3 4"><path d="M2.5 0.5 H0.8 V3.2 H2.5" stroke="#b0bcd8" stroke-width="0.7" fill="none"/></svg>
<svg class="a" style="left:539.5px;top:241px;" width="3" height="4" viewBox="0 0 3 4"><path d="M0.5 0.5 H2.2 V3.2 H0.5" stroke="#b0bcd8" stroke-width="0.7" fill="none"/></svg>
<div class="a" style="left:378.5px;top:341.5px;width:3px;height:3px;border:0.8px solid #8090b8;background:#fff"></div>
<div class="a" style="left:378px;top:241px;width:3.5px;height:3.5px;border:0.7px solid #a0acd0;border-radius:50%"></div>
<div class="a" style="left:574px;top:59px;width:9px;height:378px;background:#1c1c1e;"></div>
<svg class="a" style="left:576px;top:62px;" width="5" height="3" viewBox="0 0 5 3"><path d="M0 3 H5 L2.5 0Z" fill="#888"/></svg>
<div class="a" style="left:575px;top:84px;width:6px;height:319px;background:#3a3a3c;"></div>
<svg class="a" style="left:576px;top:431px;" width="5" height="3" viewBox="0 0 5 3"><path d="M0 0 H5 L2.5 3Z" fill="#888"/></svg>
<div class="a" style="left:148px;top:437px;width:435px;height:11px;background:#1c1c1e;"></div>
<div class="a" style="left:150px;top:438px;width:36px;height:9.5px;background:#1f1f21;"></div>
<div class="t" style="left:153.5px;top:438.2px;font-size:6.6px;color:#e8e8e8;-webkit-text-stroke-width:0.1px">150%</div>
<svg class="a" style="left:180px;top:442px;" width="4" height="2" viewBox="0 0 4 2"><path d="M0 0 H4 L2 2Z" fill="#d0d0d0"/></svg>
<div class="a" style="left:187px;top:438px;width:12px;height:9px;border:1px solid #1f4e7c;background:#121212"></div>
<div class="t" style="left:189px;top:437.5px;font-size:7px;font-style:italic;color:#f1f1f1;font-family:Liberation Serif">fx</div>
<svg class="a" style="left:201px;top:439px;" width="9" height="7" viewBox="0 0 9 7"><rect x="0.5" y="0.5" width="2.2" height="2.5" fill="#f1f1f1"/><rect x="3.4" y="0.5" width="2.2" height="2.5" fill="#f1f1f1"/><rect x="6.3" y="0.5" width="2.2" height="2.5" fill="#f1f1f1"/><rect x="0.5" y="3.8" width="2.2" height="2.5" fill="#f1f1f1"/><rect x="3.4" y="3.8" width="2.2" height="2.5" fill="#f1f1f1"/><rect x="6.3" y="3.8" width="2.2" height="2.5" fill="#f1f1f1"/></svg>
<svg class="a" style="left:214px;top:439px;" width="9" height="7" viewBox="0 0 9 7"><rect x="0.5" y="0.5" width="3.6" height="2.6" fill="none" stroke="#f1f1f1" stroke-width="0.8"/><rect x="4.9" y="0.5" width="3.6" height="2.6" fill="none" stroke="#f1f1f1" stroke-width="0.8"/><rect x="0.5" y="3.9" width="3.6" height="2.6" fill="none" stroke="#f1f1f1" stroke-width="0.8"/><rect x="4.9" y="3.9" width="3.6" height="2.6" fill="none" stroke="#f1f1f1" stroke-width="0.8"/><rect x="1.6" y="1.3" width="1.4" height="1" fill="#f1f1f1"/><rect x="6" y="1.3" width="1.4" height="1" fill="#f1f1f1"/><rect x="1.6" y="4.7" width="1.4" height="1" fill="#f1f1f1"/><rect x="6" y="4.7" width="1.4" height="1" fill="#f1f1f1"/></svg>
<div class="a" style="left:225px;top:438px;width:12px;height:9px;border:1px solid #1f4e7c;background:#121212"></div>
<svg class="a" style="left:226.5px;top:438.5px;" width="9" height="8" viewBox="0 0 9 8"><path d="M4.5 0.4 Q5 3.5 8.6 4 Q5 4.5 4.5 7.6 Q4 4.5 0.4 4 Q4 3.5 4.5 0.4Z" fill="#f1f1f1"/></svg>
<svg class="a" style="left:241px;top:440px;" width="3" height="5" viewBox="0 0 3 5"><path d="M3 0 V5 L0 2.5Z" fill="#888"/></svg>
<div class="a" style="left:247px;top:440px;width:304px;height:5px;background:#3a3a3c;"></div>
<svg class="a" style="left:566px;top:440px;" width="3" height="5" viewBox="0 0 3 5"><path d="M0 0 V5 L3 2.5Z" fill="#888"/></svg>
<div class="a" style="left:148px;top:448px;width:435px;height:12px;background:#1c1c1e;"></div>
<svg class="a" style="left:154px;top:448px" width="42" height="11"><path d="M0 0 H38 L41 11 H0Z" fill="#2d2d30"/></svg>
<svg class="a" style="left:158px;top:450px;" width="7" height="8" viewBox="0 0 7 8"><rect x="0.5" y="0.5" width="6" height="6.5" fill="none" stroke="#f1f1f1" stroke-width="0.9"/><rect x="0.5" y="0.5" width="6" height="3" fill="#f1f1f1"/><rect x="3.5" y="4.5" width="3" height="3" fill="#f1f1f1"/></svg>
<div class="t" style="left:167px;top:448.5px;font-size:6.8px;color:#f1f1f1;">Design</div>
<svg class="a" style="left:198px;top:450.5px;" width="7" height="6" viewBox="0 0 7 6"><rect x="0.5" y="0.5" width="6" height="5" fill="none" stroke="#d0d0d0" stroke-width="0.8"/><path d="M1.8 2.3 H5.2 M1.8 3.7 H5.2" stroke="#d0d0d0" stroke-width="0.6"/></svg>
<div class="t" style="left:206.5px;top:448.5px;font-size:6.8px;color:#d8d8d8;">XAML</div>
<svg class="a" style="left:557px;top:451px;" width="7" height="7" viewBox="0 0 7 7"><rect x="0.5" y="0.5" width="6" height="6" fill="none" stroke="#e0e0e0" stroke-width="0.9"/><path d="M3.5 0.5 V6.5" stroke="#e0e0e0" stroke-width="0.9"/></svg>
<svg class="a" style="left:565px;top:451px;" width="7" height="7" viewBox="0 0 7 7"><rect x="0.5" y="0.5" width="6" height="6" fill="none" stroke="#e0e0e0" stroke-width="0.9"/><path d="M0.5 3.5 H6.5" stroke="#e0e0e0" stroke-width="0.9"/></svg>
<svg class="a" style="left:573px;top:451px;" width="7" height="7" viewBox="0 0 7 7"><rect x="0.5" y="0.5" width="6" height="6" fill="none" stroke="#e0e0e0" stroke-width="0.9"/><rect x="2" y="2" width="3" height="3" fill="#e0e0e0"/></svg>
<div class="a" style="left:582px;top:59px;width:1px;height:401px;background:#2a2a2d;"></div>
<div class="a" style="left:148px;top:459.5px;width:435px;height:1px;background:#2a2a2d;"></div>
<div class="t" style="left:570px;width:40px;text-align:center;top:57px;font-size:6.6px;color:#f1f1f1;transform:rotate(90deg)">Properties</div>
<div class="t" style="left:570px;width:40px;text-align:center;top:94.5px;font-size:6.6px;color:#f1f1f1;transform:rotate(90deg)">Resources</div>
<div class="t" style="left:565px;width:50px;text-align:center;top:135.5px;font-size:6.6px;color:#f1f1f1;transform:rotate(90deg)">Team Explorer</div>
<svg class="a" style="left:590px;top:470px;" width="8" height="6" viewBox="0 0 8 6"><path d="M1 5.5 L7 0.5" stroke="#5aa8e0" stroke-width="0.8"/><path d="M4 5.5 L7 3" stroke="#5aa8e0" stroke-width="0.8"/></svg>
<div class="a" style="left:0px;top:461px;width:600px;height:3px;background:#131315;"></div>
<div class="a" style="left:0px;top:464px;width:600px;height:13px;background:#007acc;"></div>
<div class="t" style="left:3px;top:465.5px;font-size:6.7px;color:#ffffff;-webkit-text-stroke-width:0.1px">This item is too large to preview</div>
<svg class="a" style="left:590px;top:469px;" width="8" height="7" viewBox="0 0 8 7"><path d="M1 6.5 L7 0.5 M4 6.5 L7 3.5" stroke="#5aa8e0" stroke-width="0.8"/></svg>
</div></body></html>
